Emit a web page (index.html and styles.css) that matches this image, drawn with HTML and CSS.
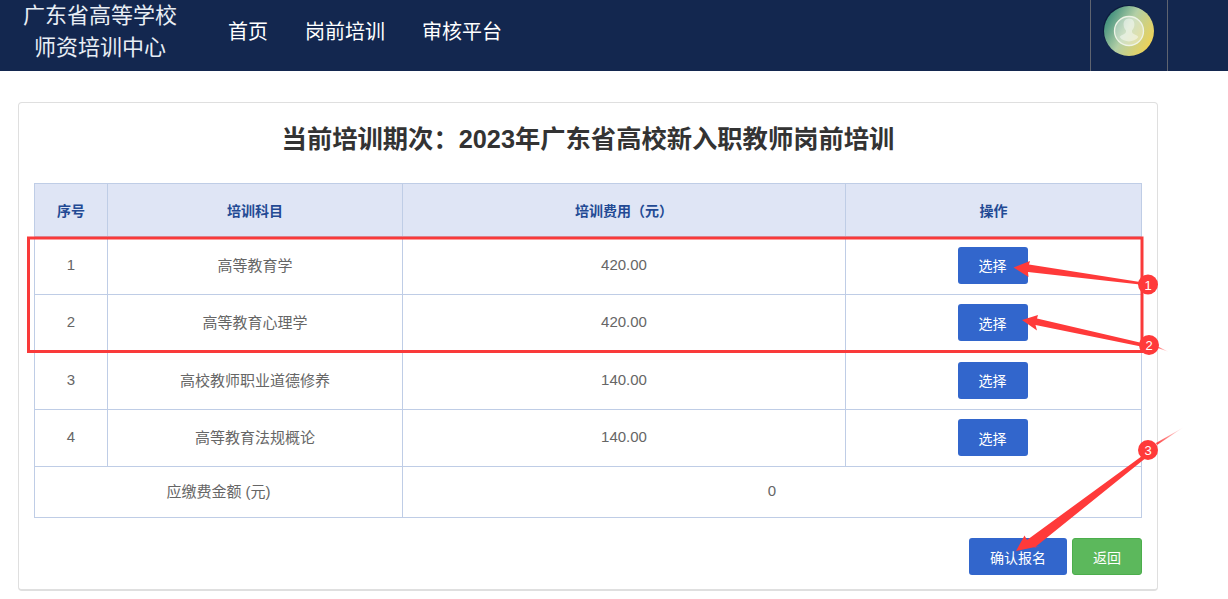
FILE: index.html
```html
<!DOCTYPE html>
<html lang="zh-CN">
<head>
<meta charset="utf-8">
<title>培训报名</title>
<link rel="stylesheet" href="styles.css">
</head>
<body>
<header class="topbar">
  <div class="brand">广东省高等学校<br>师资培训中心</div>
  <nav class="nav">
    <a class="nav-item">首页</a>
    <a class="nav-item">岗前培训</a>
    <a class="nav-item">审核平台</a>
  </nav>
  <div class="user">
    <svg class="avatar" viewBox="0 0 54 54" width="54" height="54" aria-hidden="true">
      <defs>
        <linearGradient id="avg" x1="0.05" y1="0.25" x2="0.95" y2="0.75">
          <stop offset="0" stop-color="#3f8f7c"/>
          <stop offset="0.45" stop-color="#b3cfa6"/>
          <stop offset="1" stop-color="#eed256"/>
        </linearGradient>
      </defs>
      <circle cx="26" cy="26" r="25" fill="#0d1c3e"/>
      <circle cx="27" cy="27" r="25" fill="url(#avg)"/>
      <circle cx="27" cy="27" r="14.500" fill="#ffffff" fill-opacity=".35" stroke="#eef3e6" stroke-width="1.300"/>
      <path d="M27 14.500c-3.600 0-5.600 2.800-5.400 6.200.1 2.400 1.100 4.300 2.300 5.600.4 1.800-.1 3-1.700 3.800-2 .9-3.600 1.600-4.600 3 2.300 2.900 5.700 4.400 9.400 4.400s7.100-1.500 9.400-4.400c-1-1.400-2.600-2.100-4.600-3-1.600-.8-2.100-2-1.700-3.800 1.200-1.300 2.200-3.200 2.300-5.600.2-3.400-1.800-6.200-5.400-6.200z" fill="#ffffff" fill-opacity=".45"/>
    </svg>
  </div>
</header>

<main class="card">
  <h1 class="title">当前培训期次：2023年广东省高校新入职教师岗前培训</h1>
  <table class="grid">
    <colgroup>
      <col class="col-no"><col class="col-name"><col class="col-fee"><col class="col-op">
    </colgroup>
    <thead>
      <tr><th>序号</th><th>培训科目</th><th>培训费用（元）</th><th>操作</th></tr>
    </thead>
    <tbody>
      <tr><td class="txt">1</td><td class="txt">高等教育学</td><td class="txt">420.00</td><td><button class="btn btn-blue btn-pick">选择</button></td></tr>
      <tr><td class="txt">2</td><td class="txt">高等教育心理学</td><td class="txt">420.00</td><td><button class="btn btn-blue btn-pick">选择</button></td></tr>
      <tr><td class="txt">3</td><td class="txt">高校教师职业道德修养</td><td class="txt">140.00</td><td><button class="btn btn-blue btn-pick">选择</button></td></tr>
      <tr><td class="txt">4</td><td class="txt">高等教育法规概论</td><td class="txt">140.00</td><td><button class="btn btn-blue btn-pick">选择</button></td></tr>
      <tr class="sum"><td colspan="2">应缴费金额 (元)</td><td colspan="2">0</td></tr>
    </tbody>
  </table>
  <div class="actions">
    <button class="btn btn-blue btn-confirm">确认报名</button>
    <button class="btn btn-green btn-back">返回</button>
  </div>
</main>

<svg class="marks" viewBox="0 0 1228 599" width="1228" height="599" aria-hidden="true">
  <defs>
    <linearGradient id="fade1" x1="0" y1="0" x2="1" y2="0"><stop offset="0" stop-color="#ff3a3a"/><stop offset="1" stop-color="#ff3a3a" stop-opacity="0"/></linearGradient>
  </defs>
  <rect x="28.500" y="238" width="1113.500" height="113.500" fill="none" stroke="#f93a3a" stroke-width="3"/>
  <path d="M1013.500 267.500 L1030 261 L1029 264.500 L1140 282 L1140 284.500 L1028 272 L1028.500 277 Z" fill="#ff3a3a"/>
  <path d="M1022 320 L1038 315 L1037 318.500 L1142 343 L1141 346.500 L1035.500 325 L1037 330.500 Z" fill="#ff3a3a"/>
  <path d="M1155 345 L1169 352 L1155 347 Z" fill="url(#fade1)"/>
  <path d="M1016 551 L1024.500 535.500 L1027 540 L1142 456 L1144.500 459 L1034 548 L1040 546 Z" fill="#ff3a3a"/>
  <path d="M1156 443 L1184 427 L1157 445 Z" fill="url(#fade1)"/>
  <circle cx="1148" cy="284.500" r="10" fill="#ff3a3a"/>
  <circle cx="1149" cy="345" r="10" fill="#ff3a3a"/>
  <circle cx="1148" cy="450" r="10" fill="#ff3a3a"/>
  <text class="mark-num" x="1148" y="289.500">1</text>
  <text class="mark-num" x="1149" y="350">2</text>
  <text class="mark-num" x="1148" y="455">3</text>
</svg>
</body>
</html>
```

FILE: styles.css
```css
* { box-sizing: border-box; }
html, body { margin: 0; padding: 0; height: 599px; overflow: hidden; }
body {
  position: relative;
  background: #fff;
  color: #555;
  font-family: "Liberation Sans", "Noto Sans CJK SC", sans-serif;
  font-size: 15px;
}
.topbar {
  height: 71px;
  background: #13274f;
  color: #fff;
  display: flex;
  align-items: stretch;
}
.brand {
  width: 200px;
  text-align: center;
  font-size: 22px;
  line-height: 32px;
  color: #e8eef5;
}
.nav {
  display: flex;
  gap: 37px;
  padding-left: 28px;
  font-size: 20px;
  line-height: 64px;
}
.nav-item { color: #fff; }
.user {
  margin-left: auto;
  margin-right: 60px;
  width: 78px;
  border-left: 1px solid #5f6470;
  border-right: 1px solid #5f6470;
  display: flex;
  justify-content: center;
  padding-top: 4px;
}
.avatar { display: block; }
.card {
  width: 1140px;
  height: 489px;
  margin: 31px 0 0 18px;
  padding: 0 15px;
  border: 1px solid #dfdfdf;
  border-bottom-width: 2px;
  border-radius: 4px;
  background: #fff;
}
.title {
  margin: 0;
  height: 80px;
  padding-top: 18px;
  text-align: center;
  font-size: 25.300px;
  line-height: 36px;
  font-weight: 700;
  color: #333;
}
.grid {
  width: 1107px;
  table-layout: fixed;
  border-collapse: collapse;
  text-align: center;
}
.col-no { width: 73px; }
.col-name { width: 295px; }
.col-fee { width: 443px; }
.col-op { width: 296px; }
.grid th, .grid td {
  border: 1px solid #bfcde6;
  padding: 0;
  vertical-align: middle;
}
.grid th {
  height: 53px;
  background: #dfe5f5;
  color: #234a94;
  font-size: 14px;
  font-weight: 700;
}
.grid td { height: 57.500px; color: #666; }
.grid td.txt { padding-bottom: 2px; }
.grid .sum td { height: 51px; padding-bottom: 4px; }
.btn {
  border: 0;
  border-radius: 3px;
  color: #fff;
  font-family: inherit;
  font-size: 14px;
  height: 37px;
  padding: 0;
  vertical-align: middle;
}
.btn-blue { background: #3266cc; }
.btn-green { background: #5cb85c; border: 1px solid #4cae4c; }
.btn-pick { width: 70px; margin-right: 2px; }
.actions {
  display: flex;
  justify-content: flex-end;
  gap: 5px;
  margin-top: 20px;
}
.btn-confirm { width: 98px; }
.btn-back { width: 70px; }
.marks {
  position: absolute;
  left: 0;
  top: 0;
  pointer-events: none;
}
.mark-num {
  fill: #fff;
  font-family: "Liberation Sans", sans-serif;
  font-size: 13px;
  text-anchor: middle;
}
```
